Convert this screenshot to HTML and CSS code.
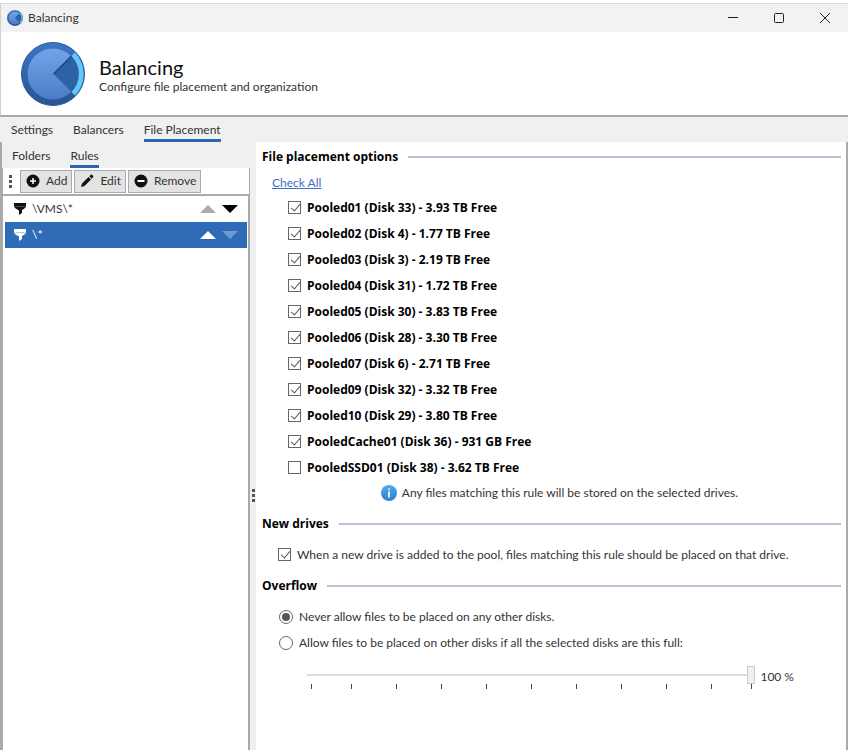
FILE: index.html
```html
<!DOCTYPE html>
<html lang="en">
<head>
    <meta charset="UTF-8">
    <meta name="viewport" content="width=device-width, initial-scale=1.0">
    <title>Balancing</title>
    <link rel="stylesheet" href="styles.css">
</head>
<body>
    <svg class="defs" width="0" height="0" aria-hidden="true">
        <defs>
            <linearGradient id="ring" x1="0" y1="0" x2="0" y2="1">
                <stop offset="0" stop-color="#3a76c6"/>
                <stop offset="1" stop-color="#2a5490"/>
            </linearGradient>
            <linearGradient id="disc" x1="0" y1="0" x2="0" y2="1">
                <stop offset="0" stop-color="#70a6e8"/>
                <stop offset="1" stop-color="#4a7cc6"/>
            </linearGradient>
            <linearGradient id="info" x1="0" y1="0" x2="0" y2="1">
                <stop offset="0" stop-color="#52a9e6"/>
                <stop offset="1" stop-color="#2f7fd0"/>
            </linearGradient>
            <symbol id="logo" viewBox="0 0 64 64">
                <circle cx="32" cy="32" r="31.5" fill="url(#ring)" stroke="#2c5a9c"/>
                <circle cx="32" cy="32" r="25.5" fill="url(#disc)"/>
                <path d="M32.500 32 50.500 14A25.500 25.500 0 0 1 50.500 50Z" fill="#2f62a4"/>
                <path d="M32.500 32 50.500 14" stroke="#1d4478" stroke-width="1.500"/>
                <path d="M50.500 14 54 10.500A31 31 0 0 1 54 53.500L50.500 50A25.500 25.500 0 0 0 50.500 14Z" fill="#62c8f8"/>
            </symbol>
            <symbol id="filter" viewBox="0 0 12 12">
                <path d="M0 0H12V3Q12 5 8 7V10L5 12V7.500Q0 5 0 3Z" fill="currentColor"/>
                <path d="M1 3.500H11" stroke="#888" stroke-opacity=".5"/>
            </symbol>
        </defs>
    </svg>

    <div class="window">
        <header class="titlebar">
            <svg class="titlebar-logo"><use href="#logo"/></svg>
            <span class="titlebar-text">Balancing</span>
            <button class="caption-button" aria-label="Minimize">
                <svg width="12" height="12" viewBox="0 0 12 12"><path d="M1 5.500H11"/></svg>
            </button>
            <button class="caption-button" aria-label="Maximize">
                <svg width="12" height="12" viewBox="0 0 12 12"><rect x="1.500" y="1.500" width="9" height="9" rx="1"/></svg>
            </button>
            <button class="caption-button" aria-label="Close">
                <svg width="12" height="12" viewBox="0 0 12 12"><path d="M1 1 11 11M11 1 1 11"/></svg>
            </button>
        </header>

        <div class="banner">
            <svg class="banner-logo"><use href="#logo"/></svg>
            <div>
                <h1>Balancing</h1>
                <p>Configure file placement and organization</p>
            </div>
        </div>

        <nav class="tabs">
            <button class="tab">Settings</button>
            <button class="tab">Balancers</button>
            <button class="tab active">File Placement</button>
        </nav>

        <div class="content">
            <aside class="sidebar">
                <nav class="tabs subtabs">
                    <button class="tab">Folders</button>
                    <button class="tab active">Rules</button>
                </nav>
                <div class="toolbar">
                    <svg class="grip" width="3" height="13" viewBox="0 0 3 13"><path d="M0 0h3v3H0zM0 5h3v3H0zM0 10h3v3H0z"/></svg>
                    <button class="tool">
                        <svg width="14" height="14" viewBox="0 0 14 14"><circle cx="7" cy="7" r="6.500"/><path d="M7 4V10M4 7H10" stroke="#fff" stroke-width="1.500"/></svg>
                        Add
                    </button>
                    <button class="tool">
                        <svg width="14" height="14" viewBox="0 0 14 14"><path d="M1 13 2 9.500 8.500 3 11 5.500 4.500 12ZM9.300 2.200 10.800 .800Q11.500 .300 12.200 1L13 1.800Q13.700 2.500 13 3.200L11.800 4.700Z"/></svg>
                        Edit
                    </button>
                    <button class="tool">
                        <svg width="14" height="14" viewBox="0 0 14 14"><circle cx="7" cy="7" r="6.500"/><path d="M3.500 7H10.500" stroke="#fff" stroke-width="2"/></svg>
                        Remove
                    </button>
                </div>
                <ul class="rules">
                    <li class="rule">
                        <svg class="rule-icon"><use href="#filter"/></svg>
                        <span class="rule-name">\VMS\*</span>
                        <button class="move" aria-label="Move up" disabled><svg width="16" height="8" viewBox="0 0 16 8"><path d="M8 0 16 8H0Z"/></svg></button>
                        <button class="move" aria-label="Move down"><svg width="16" height="8" viewBox="0 0 16 8"><path d="M0 0H16L8 8Z"/></svg></button>
                    </li>
                    <li class="rule selected">
                        <svg class="rule-icon"><use href="#filter"/></svg>
                        <span class="rule-name">\*</span>
                        <button class="move" aria-label="Move up"><svg width="16" height="8" viewBox="0 0 16 8"><path d="M8 0 16 8H0Z"/></svg></button>
                        <button class="move" aria-label="Move down" disabled><svg width="16" height="8" viewBox="0 0 16 8"><path d="M0 0H16L8 8Z"/></svg></button>
                    </li>
                </ul>
            </aside>

            <div class="splitter">
                <svg class="grip" width="3" height="13" viewBox="0 0 3 13"><path d="M0 0h3v3H0zM0 5h3v3H0zM0 10h3v3H0z"/></svg>
            </div>

            <main class="options">
                <h2>File placement options</h2>
                <a class="check-all" href="#">Check All</a>
                <div class="drives">
                    <label class="option"><input type="checkbox" checked>Pooled01 (Disk 33) - 3.93 TB Free</label>
                    <label class="option"><input type="checkbox" checked>Pooled02 (Disk 4) - 1.77 TB Free</label>
                    <label class="option"><input type="checkbox" checked>Pooled03 (Disk 3) - 2.19 TB Free</label>
                    <label class="option"><input type="checkbox" checked>Pooled04 (Disk 31) - 1.72 TB Free</label>
                    <label class="option"><input type="checkbox" checked>Pooled05 (Disk 30) - 3.83 TB Free</label>
                    <label class="option"><input type="checkbox" checked>Pooled06 (Disk 28) - 3.30 TB Free</label>
                    <label class="option"><input type="checkbox" checked>Pooled07 (Disk 6) - 2.71 TB Free</label>
                    <label class="option"><input type="checkbox" checked>Pooled09 (Disk 32) - 3.32 TB Free</label>
                    <label class="option"><input type="checkbox" checked>Pooled10 (Disk 29) - 3.80 TB Free</label>
                    <label class="option"><input type="checkbox" checked>PooledCache01 (Disk 36) - 931 GB Free</label>
                    <label class="option"><input type="checkbox">PooledSSD01 (Disk 38) - 3.62 TB Free</label>
                </div>
                <p class="hint">
                    <svg width="16" height="16" viewBox="0 0 16 16"><circle cx="8" cy="8" r="8" fill="url(#info)"/><path d="M8 3.500V5.300M8 6.500V12.500" stroke="#fff" stroke-width="1.600"/></svg>
                    Any files matching this rule will be stored on the selected drives.
                </p>

                <h2>New drives</h2>
                <div class="group">
                    <label class="option"><input type="checkbox" checked>When a new drive is added to the pool, files matching this rule should be placed on that drive.</label>
                </div>

                <h2>Overflow</h2>
                <div class="group">
                    <label class="option"><input type="radio" name="overflow" checked>Never allow files to be placed on any other disks.</label>
                    <label class="option"><input type="radio" name="overflow">Allow files to be placed on other disks if all the selected disks are this full:</label>
                </div>
                <div class="fill">
                    <div class="fill-slider">
                        <input type="range" id="fill" min="0" max="100" value="100" aria-label="Fill limit">
                        <div class="ticks">
                            <i></i><i></i><i></i><i></i><i></i><i></i><i></i><i></i><i></i><i></i>
                        </div>
                    </div>
                    <output for="fill">100 %</output>
                </div>
            </main>
        </div>
    </div>
</body>
</html>
```
FILE: styles.css
```css
* {
    box-sizing: border-box;
}

body {
    margin: 0;
    font-family: Lato, "Open Sans", sans-serif;
    font-size: 12px;
    line-height: 16px;
    color: #333;
    background-color: #fff;
}

h1, h2, p, ul {
    margin: 0;
    padding: 0;
    font-weight: normal;
}

button {
    font: inherit;
    color: inherit;
    background: none;
    border: 0;
    padding: 0;
}

.defs {
    position: absolute;
}

.window {
    display: flex;
    flex-direction: column;
    min-height: 100vh;
    border-top: 3px solid #fff;
    background-color: #f0f0f0;
}

/* Title bar */
.titlebar {
    display: flex;
    align-items: center;
    height: 29px;
    padding-left: 6px;
    border-top: 1px solid #d8d8d8;
    border-left: 1px solid #d0d0d0;
    background-color: #f2f2f2;
}

.titlebar-logo {
    width: 16px;
    height: 16px;
}

.titlebar-text {
    flex: 1;
    padding-left: 5px;
}

.caption-button {
    width: 46px;
    height: 28px;
}

.caption-button svg {
    display: block;
    margin: auto;
    fill: none;
    stroke: #222;
}

/* Banner */
.banner {
    display: flex;
    align-items: center;
    gap: 14px;
    height: 85px;
    padding-left: 20px;
    border-left: 1px solid #d0d0d0;
    border-bottom: 2px solid #aaa;
    background-color: #fff;
}

.banner-logo {
    width: 64px;
    height: 64px;
}

.banner h1 {
    padding-top: 3px;
    font-size: 20px;
    line-height: 24px;
    color: #111;
}

/* Tabs */
.tabs {
    display: flex;
    gap: 20px;
    height: 25px;
    padding-left: 11px;
}

.tab {
    padding-top: 4px;
    border-bottom: 3px solid transparent;
}

.tab.active {
    border-color: #2b66b4;
}

.content {
    display: flex;
    flex: 1;
}

/* Sidebar */
.sidebar {
    display: flex;
    flex-direction: column;
    width: 250px;
    border-left: 2px solid #aaa;
}

.subtabs {
    height: 26px;
    padding-left: 10px;
}

.toolbar {
    display: flex;
    align-items: center;
    gap: 2px;
    height: 26px;
    padding-left: 6px;
    border-right: 1px solid #aaa;
    border-left: 1px solid #aaa;
    background-color: #fff;
}

.grip {
    flex: none;
    fill: #555;
}

.toolbar .grip {
    margin-right: 6px;
}

.tool {
    display: flex;
    align-items: center;
    gap: 6px;
    height: 23px;
    padding: 0 4px 0 5px;
    border: 1px solid #aaa;
    background-color: #e3e3e3;
}

.tool svg {
    fill: #111;
}

.rules {
    flex: 1;
    list-style: none;
    border: 1px solid #aaa;
    border-width: 2px 2px 0 1px;
    padding: 0 1px 0 2px;
    background-color: #fff;
}

.rule {
    display: flex;
    align-items: center;
    gap: 6px;
    height: 26px;
    padding: 0 9px;
}

.rule.selected {
    color: #fff;
    background-color: #2f6cb8;
}

.rule-icon {
    width: 12px;
    height: 12px;
    color: #111;
}

.selected .rule-icon {
    color: #fff;
}

.rule-name {
    flex: 1;
}

.move {
    color: #000;
}

.move svg {
    display: block;
    fill: currentColor;
}

.move:disabled {
    color: #aaa;
}

.selected .move {
    color: #fff;
}

.selected .move:disabled {
    color: #6f9ad0;
}

.splitter {
    display: flex;
    flex: none;
    justify-content: center;
    align-items: center;
    width: 6px;
    padding-top: 98px;
}

/* Options pane */
.options {
    flex: 1;
    padding: 7px 5px 0 6px;
    border-right: 2px solid #aaa;
    background-color: #fff;
}

.options h2 {
    display: flex;
    align-items: center;
    gap: 10px;
    font-family: "Open Sans", sans-serif;
    font-size: 12px;
    font-weight: bold;
    color: #000;
}

.options h2::after {
    content: "";
    flex: 1;
    height: 2px;
    background-color: #b8c2d8;
}

.check-all {
    display: block;
    width: fit-content;
    margin: 10px 10px 4px;
    color: #3f6fc9;
}

.drives {
    padding-left: 26px;
    font-family: "Open Sans", sans-serif;
    font-size: 12px;
    font-weight: bold;
    color: #000;
}

.option {
    display: flex;
    align-items: center;
    gap: 6px;
    height: 26px;
}

.option input {
    flex: none;
    appearance: none;
    width: 13px;
    height: 13px;
    margin: 0 0 1px;
    border: 1px solid #666;
    background-color: #fff;
}

.option input[type="checkbox"]:checked::after {
    content: "";
    display: block;
    width: 4px;
    height: 8px;
    margin: 0 0 0 4px;
    border: solid #555;
    border-width: 0 1px 1px 0;
    transform: rotate(40deg);
}

.option input[type="radio"] {
    width: 14px;
    height: 14px;
    margin-left: 1px;
    border-radius: 50%;
}

.option input[type="radio"]:checked {
    background: #555 content-box;
    padding: 2px;
}

.hint {
    display: flex;
    justify-content: center;
    align-items: center;
    gap: 5px;
    height: 24px;
    margin-bottom: 11px;
    padding-left: 16px;
}

.group {
    padding: 10px 16px;
}

.fill {
    display: flex;
    gap: 5px;
    padding: 0 47px 0 45px;
}

.fill-slider {
    flex: 1;
}

.fill-slider input {
    appearance: none;
    display: block;
    width: 100%;
    height: 18px;
    margin: 0;
    background: linear-gradient(#dcdcdc, #dcdcdc) center / 100% 2px no-repeat;
}

.fill-slider input::-webkit-slider-thumb {
    appearance: none;
    width: 8px;
    height: 18px;
    border: 1px solid #ccc;
    background-color: #f0f0f0;
}

.ticks {
    display: grid;
    grid-template-columns: 40fr repeat(8, 45fr) 41fr;
    height: 5px;
    margin: 0 3px 0 4px;
}

.ticks i {
    border-left: 1px solid #444;
}

.ticks i:last-child {
    border-right: 1px solid #444;
}

.fill output {
    min-width: 32px;
    padding-top: 3px;
}
```
